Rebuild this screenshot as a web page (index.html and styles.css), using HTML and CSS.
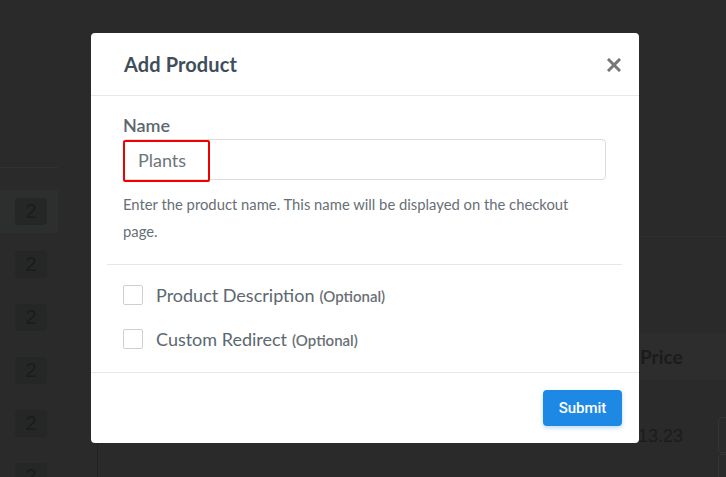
FILE: index.html
```html
<!DOCTYPE html>
<html lang="en">
<head>
    <meta charset="UTF-8">
    <meta name="viewport" content="width=device-width, initial-scale=1.0">
    <title>Add Product</title>
    <link rel="stylesheet" href="styles.css">
</head>
<body>

    <!-- page behind the overlay -->
    <div class="page">
        <div class="sidebar">
            <div class="sidebar-top"></div>
            <div class="step active"><span class="badge">2</span></div>
            <div class="step"><span class="badge">2</span></div>
            <div class="step"><span class="badge">2</span></div>
            <div class="step"><span class="badge">2</span></div>
            <div class="step"><span class="badge">2</span></div>
            <div class="step"><span class="badge">2</span></div>
        </div>
        <div class="main">
            <div class="main-top"></div>
            <div class="table">
                <div class="table-head">
                    <span class="col-name"></span>
                    <span class="col-type"></span>
                    <span class="col-price">Price</span>
                </div>
                <div class="table-row">
                    <span class="col-name"><i class="dot"></i>2 Plants in White Raisin Pots</span>
                    <span class="col-type">One Time</span>
                    <span class="col-price">$13.23</span>
                    <span class="row-box"></span>
                    <span class="row-box second"></span>
                </div>
            </div>
        </div>
    </div>

    <div class="modal">
        <div class="modal-header">
            <h2>Add Product</h2>
            <button class="close" aria-label="Close">
                <svg width="14" height="14" viewBox="0 0 14 14">
                    <path d="M2 2 L12 12 M12 2 L2 12" stroke="#777" stroke-width="3" stroke-linecap="square"/>
                </svg>
            </button>
        </div>
        <div class="modal-body">
            <label class="field-label">Name</label>
            <div class="input-wrap">
                <input class="text-input" type="text" value="Plants">
                <span class="highlight"></span>
            </div>
            <p class="help">Enter the product name. This name will be displayed on the checkout page.</p>
            <div class="divider"></div>
            <div class="options">
                <label class="option"><span class="check"></span>Product Description <small>(Optional)</small></label>
                <label class="option"><span class="check"></span>Custom Redirect <small>(Optional)</small></label>
            </div>
        </div>
        <div class="modal-footer">
            <button class="submit">Submit</button>
        </div>
    </div>

</body>
</html>
```

FILE: styles.css
```css
body, html {
    margin: 0;
    padding: 0;
    width: 100%;
    height: 100%;
    overflow: hidden;
    background: #2a2a2a;
    font-family: Lato, "Open Sans", sans-serif;
}

/* Background page (dimmed) */
.page {
    display: flex;
    height: 100%;
}

.sidebar {
    width: 58px;
    flex-shrink: 0;
    display: flex;
    flex-direction: column;
    gap: 10px;
}

.sidebar > * {
    flex-shrink: 0;
}

.sidebar-top {
    height: 167px;
    border-bottom: 1px solid #313131;
    margin-bottom: 12px;
}

.step {
    height: 43px;
    display: flex;
    align-items: center;
    padding-left: 15px;
}

.step.active {
    background: #2d2e2e;
}

.badge {
    width: 32px;
    height: 27px;
    border-radius: 4px;
    background: #252727;
    color: #1b1b1b;
    font-family: "Liberation Sans", Arial, sans-serif;
    font-size: 20px;
    display: flex;
    align-items: center;
    justify-content: center;
}

.main {
    flex: 1;
    margin-left: 39px;
    display: flex;
    flex-direction: column;
    min-width: 0;
}

.main-top {
    height: 236px;
    border-bottom: 1px solid #2f2f2f;
    margin-bottom: 96px;
    flex-shrink: 0;
}

.table {
    flex: 1;
    border-left: 1px solid #222;
}

.table-head, .table-row {
    display: flex;
    align-items: center;
    font-family: "Liberation Sans", Arial, sans-serif;
    color: #1c1c1c;
    white-space: nowrap;
}

.table-head {
    height: 47px;
    background: #2d2d2d;
    font-family: Lato, sans-serif;
    font-weight: 700;
    font-size: 19px;
    color: #1b1b1b;
}

.table-row {
    height: 36px;
    margin-top: 38px;
    font-size: 15px;
    position: relative;
}

.col-name {
    box-sizing: border-box;
    width: 289px;
    flex-shrink: 0;
    padding-left: 64px;
    display: flex;
    align-items: center;
}

.col-type {
    width: 241px;
    flex-shrink: 0;
}

.table-row .col-price {
    font-size: 18px;
}

.table-head .col-price {
    margin-left: 12px;
}

.dot {
    width: 6px;
    height: 6px;
    border-radius: 50%;
    background: #1f3a1f;
    margin-right: 9px;
    margin-left: -15px;
}

.row-box {
    position: absolute;
    left: 620px;
    top: -1px;
    width: 40px;
    height: 34px;
    border: 1px solid #353535;
    border-radius: 4px;
}

.row-box.second {
    top: 36px;
}

/* Modal */
.modal {
    position: absolute;
    left: 91px;
    top: 33px;
    width: 548px;
    background: #fff;
    border-radius: 4px;
}

.modal-header {
    height: 62px;
    padding: 0 18px 0 33px;
    border-bottom: 1px solid #e8e8e8;
    display: flex;
    align-items: center;
    justify-content: space-between;
}

.modal-header h2 {
    margin: 0;
    font-size: 20px;
    font-weight: 700;
    color: #3f4e59;
    letter-spacing: 0.1px;
}

.close {
    background: none;
    border: none;
    padding: 0;
    width: 14px;
    height: 14px;
    cursor: pointer;
    margin-top: 2px;
}

.modal-body {
    padding: 18px 33px 0 32px;
}

.field-label {
    display: block;
    font-size: 18px;
    font-weight: 600;
    color: #5c6870;
    line-height: 22px;
    margin-bottom: 3px;
}

.input-wrap {
    position: relative;
}

.text-input {
    box-sizing: border-box;
    width: 100%;
    height: 41px;
    border: 1px solid #dcdcdc;
    border-radius: 4px;
    padding: 0 14px;
    font-family: Lato, sans-serif;
    font-size: 18px;
    color: #6d757a;
    outline: none;
}

.highlight {
    position: absolute;
    left: 0;
    top: 1px;
    width: 83px;
    height: 38px;
    border: 2px solid #f20000;
    border-radius: 2px;
}

.help {
    margin: 11px 0 0;
    font-size: 14.8px;
    line-height: 27px;
    color: #676f75;
    padding-right: 30px;
}

.divider {
    height: 1px;
    background: #e6e6e6;
    margin: 19px -16px 0 -16px;
}

.options {
    padding: 8px 0 11px;
}

.option {
    height: 44px;
    display: flex;
    align-items: center;
    font-size: 18px;
    color: #5c6870;
}

.option small {
    font-size: 15px;
    font-weight: 600;
    color: #687075;
    margin-left: 5px;
    margin-top: 2px;
}

.check {
    box-sizing: border-box;
    width: 20px;
    height: 20px;
    border: 1px solid #cfcfcf;
    border-radius: 2px;
    margin-right: 13px;
}

.modal-footer {
    border-top: 1px solid #e8e8e8;
    padding: 17px 17px 17px;
    display: flex;
    justify-content: flex-end;
}

.submit {
    width: 79px;
    height: 36px;
    background: #1e88e5;
    color: #fff;
    border: none;
    border-radius: 4px;
    font-family: Roboto, sans-serif;
    font-weight: 500;
    font-size: 15px;
    box-shadow: 0 2px 4px rgba(30, 136, 229, 0.3);
    cursor: pointer;
}
```
